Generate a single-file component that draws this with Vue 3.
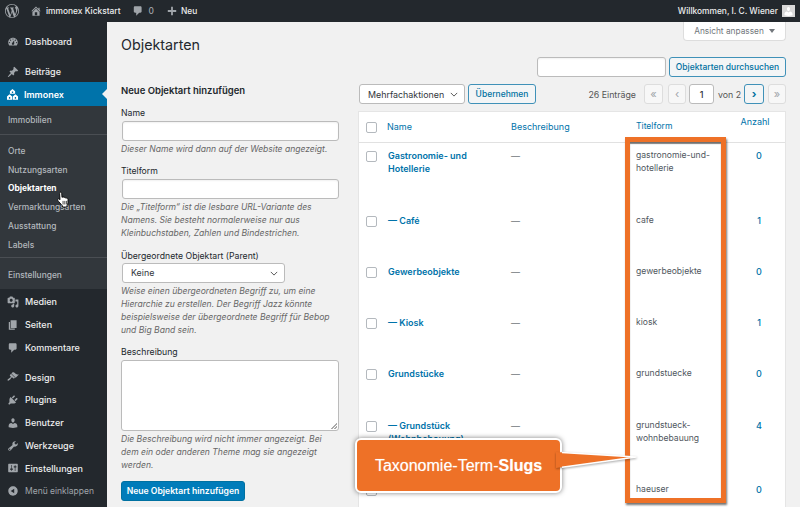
<script setup>
const icons = {
  dashboard: 'M3.76 16h12.48c1.1-1.37 1.76-3.11 1.76-5 0-4.42-3.58-8-8-8s-8 3.58-8 8c0 1.89.66 3.63 1.76 5zM10 4c.55 0 1 .45 1 1s-.45 1-1 1-1-.45-1-1 .45-1 1-1zM6 6c.55 0 1 .45 1 1s-.45 1-1 1-1-.45-1-1 .45-1 1-1zm8 0c.55 0 1 .45 1 1s-.45 1-1 1-1-.45-1-1 .45-1 1-1zm-5.37 5.55L12 7v6c0 1.1-.9 2-2 2s-2-.9-2-2c0-.57.24-1.08.63-1.45zM4 10c.55 0 1 .45 1 1s-.45 1-1 1-1-.45-1-1 .45-1 1-1zm12 0c.55 0 1 .45 1 1s-.45 1-1 1-1-.45-1-1 .45-1 1-1z',
  pin: 'M10.44 3.02l1.82-1.82 6.36 6.35-1.83 1.82c-1.05-.68-2.48-.57-3.41.36l-.75.75c-.92.93-1.04 2.35-.35 3.41l-1.83 1.82-2.41-2.41-2.8 2.79c-.42.42-3.38 2.71-3.8 2.29s1.86-3.39 2.28-3.81l2.79-2.79L4.1 9.36l1.83-1.82c1.05.69 2.48.57 3.4-.36l.75-.75c.93-.92 1.05-2.35.36-3.41z',
  immonex: 'M10 1.500l4 3.600V9H6V5.100zM9 5.500v2h2v-2zM5.500 9.500l4 3.400V18h-8v-5.100zM4.500 14v2.500h2V14zM14.500 9.500l4 3.400V18h-8v-5.100zM13.500 14v2.500h2V14z',
  media: 'M13 11V4c0-.55-.45-1-1-1h-1.670L9 1H5L3.670 3H2c-.55 0-1 .45-1 1v7c0 .55.45 1 1 1h10c.55 0 1-.45 1-1zM7 4.500c1.380 0 2.500 1.120 2.500 2.500S8.380 9.500 7 9.500 4.500 8.380 4.500 7 5.620 4.500 7 4.500zM14 6h5v10.500c0 1.380-1.120 2.500-2.500 2.500S14 17.880 14 16.500s1.120-2.500 2.500-2.500c.17 0 .34.02.5.05V9h-3V6zm-4 8.050V13h2v3.500c0 1.380-1.120 2.500-2.500 2.500S7 17.880 7 16.500 8.120 14 9.500 14c.17 0 .34.02.5.05z',
  page: 'M6 15V2h10v13H6zm-1 1h8v2H3V5h2v11z',
  comment: 'M5 2h9c1.100 0 2 .9 2 2v7c0 1.100-.9 2-2 2h-2l-5 5v-5H5c-1.100 0-2-.9-2-2V4c0-1.100.9-2 2-2z',
  design: 'M14.480 11.060L7.410 3.990l1.500-1.500c.5-.56 2.300-.47 3.510.32 1.210.8 1.430 1.280 2.910 2.100 1.180.64 2.450 1.260 4.450.85zm-.71.71L6.700 4.700 4.930 6.470c-.39.39-.39 1.020 0 1.410l1.060 1.060c.39.39.39 1.030 0 1.420-.6.6-1.430 1.110-2.210 1.690-.35.26-.7.53-1.010.84C1.430 13.230.4 14.980 1.200 15.800c.8.82 2.570-.23 3.910-1.570.31-.31.58-.66.85-1.020.57-.78 1.080-1.610 1.690-2.210.39-.39 1.020-.39 1.410 0l1.060 1.060c.39.39 1.020.39 1.410 0z',
  plugin: 'M13.110 4.360L9.870 7.600 8 5.730l3.240-3.240c.35-.34 1.050-.2 1.560.32.52.51.66 1.210.31 1.550zm-8 1.770l.91-1.120 9.010 9.010-1.190.84c-.71.71-2.630 1.160-3.820 1.160H6.140L4.900 17.260c-.59.59-1.540.59-2.120 0-.59-.58-.59-1.530 0-2.120l1.240-1.240v-3.880c0-1.130.4-3.190 1.090-3.890zm7.260 3.970l3.240-3.240c.34-.35 1.040-.21 1.550.31.52.51.66 1.210.31 1.550l-3.240 3.250z',
  users: 'M10 9.250c-2.270 0-2.730-3.440-2.730-3.440C7 4.020 7.820 2 9.970 2c2.160 0 2.980 2.020 2.710 3.810 0 0-.41 3.440-2.680 3.440zm0 2.570L12.720 10c2.390 0 4.520 2.330 4.520 4.530v2.490s-3.650 1.130-7.240 1.130c-3.650 0-7.240-1.130-7.240-1.130v-2.490c0-2.250 1.940-4.480 4.470-4.480z',
  tools: 'M16.680 9.770c-1.340 1.340-3.300 1.670-4.950.99l-5.410 6.520c-.99.99-2.590.99-3.580 0s-.99-2.590 0-3.570l6.520-5.420c-.68-1.650-.35-3.610.99-4.950 1.280-1.280 3.120-1.620 4.720-1.060l-2.890 2.890 2.820 2.820 2.860-2.870c.53 1.580.18 3.390-1.080 4.650zM3.810 16.210c.4.39 1.040.39 1.430 0 .4-.4.4-1.040 0-1.430-.39-.4-1.030-.4-1.430 0-.39.39-.39 1.030 0 1.430z',
  settings: 'M18 16V4c0-.55-.45-1-1-1H3c-.55 0-1 .45-1 1v12c0 .55.45 1 1 1h14c.55 0 1-.45 1-1zM8 11h1c.55 0 1 .45 1 1s-.45 1-1 1H8v1.500c0 .28-.22.5-.5.5s-.5-.22-.5-.5V13H6c-.55 0-1-.45-1-1s.45-1 1-1h1V5.500c0-.28.22-.5.5-.5s.5.22.5.5V11zm5-2h-1c-.55 0-1-.45-1-1s.45-1 1-1h1V5.500c0-.28.22-.5.5-.5s.5.22.5.5V7h1c.55 0 1 .45 1 1s-.45 1-1 1h-1v5.500c0 .28-.22.5-.5.5s-.5-.22-.5-.5V9z',
  collapse: 'M10 2.160c4.330 0 7.840 3.510 7.840 7.840s-3.510 7.840-7.840 7.840S2.160 14.330 2.160 10 5.710 2.160 10 2.160zm2 11.720V6.120L6.180 9.970z',
  home: 'M16 8.500l1.530 1.530-1.060 1.060L10 4.620l-6.470 6.470-1.060-1.060L10 2.500l4 4v-2h2v4zm-6-2.460l6 5.990V18H4v-5.970zM12 17v-5H8v5h4z',
  plus: 'M17 8.500v3h-5.500V17h-3v-5.500H3v-3h5.500V3h3v5.500z',
  wp: 'M20 10c0-5.510-4.490-10-10-10C4.480 0 0 4.490 0 10c0 5.520 4.480 10 10 10 5.510 0 10-4.480 10-10zM7.780 15.370L4.370 6.220c.55-.02 1.170-.08 1.170-.08.5-.06.44-1.130-.06-1.110 0 0-1.450.11-2.370.11-.18 0-.37 0-.58-.01C4.120 2.690 6.870 1.110 10 1.110c2.330 0 4.450.87 6.050 2.340-.68-.11-1.650.39-1.650 1.580 0 .74.45 1.360.9 2.100.35.61.55 1.360.55 2.460 0 1.490-1.400 5-1.400 5l-3.030-8.370c.54-.02.82-.17.82-.17.5-.05.44-1.250-.06-1.220 0 0-1.440.12-2.380.12-.87 0-2.330-.12-2.330-.12-.5-.03-.56 1.200-.06 1.220l.92.08 1.260 3.410zM17.410 10c.24-.64.74-1.870.43-4.250.7 1.290 1.050 2.710 1.050 4.250 0 3.290-1.730 6.240-4.400 7.780.97-2.590 1.940-5.200 2.920-7.780zM6.100 18.090C3.120 16.650 1.110 13.530 1.110 10c0-1.300.23-2.480.72-3.590C3.250 10.300 4.670 14.200 6.100 18.090zm4.030-6.630l2.580 6.980c-.86.29-1.760.45-2.710.45-.79 0-1.570-.11-2.290-.33.81-2.380 1.620-4.740 2.420-7.100z'
}

const subItems = ['Orte', 'Nutzungsarten', 'Objektarten', 'Vermarktungsarten', 'Ausstattung', 'Labels']
const lowerMenu = [
  { label: 'Medien', icon: 'media' },
  { label: 'Seiten', icon: 'page' },
  { label: 'Kommentare', icon: 'comment' }
]
const toolMenu = [
  { label: 'Design', icon: 'design' },
  { label: 'Plugins', icon: 'plugin' },
  { label: 'Benutzer', icon: 'users' },
  { label: 'Werkzeuge', icon: 'tools' },
  { label: 'Einstellungen', icon: 'settings' }
]

const rows = [
  { name: 'Gastronomie- und Hotellerie', slug: 'gastronomie-und-hotellerie', count: 0 },
  { name: '— Café', slug: 'cafe', count: 1 },
  { name: 'Gewerbeobjekte', slug: 'gewerbeobjekte', count: 0 },
  { name: '— Kiosk', slug: 'kiosk', count: 1 },
  { name: 'Grundstücke', slug: 'grundstuecke', count: 0 },
  { name: '— Grundstück (Wohnbebauung)', slug: 'grundstueck-wohnbebauung', count: 4 },
  { name: 'Häuser', slug: 'haeuser', count: 0 }
]
</script>

<template>
  <div class="page">
    <header class="topbar">
      <svg class="bar-wp" viewBox="0 0 20 20"><path :d="icons.wp" fill-rule="evenodd" /></svg>
      <svg class="bar-icon home" viewBox="0 0 20 20"><path :d="icons.home" fill-rule="evenodd" /></svg>
      <span class="bar-text site">immonex Kickstart</span>
      <svg class="bar-icon bubble" viewBox="0 0 20 20"><path :d="icons.comment" /></svg>
      <span class="bar-text zero">0</span>
      <svg class="bar-icon plus" viewBox="0 0 20 20"><path :d="icons.plus" /></svg>
      <span class="bar-text">Neu</span>
      <span class="bar-text welcome">Willkommen, I. C. Wiener</span>
      <span class="avatar">
        <svg viewBox="0 0 20 20"><path :d="icons.users" /></svg>
      </span>
    </header>

    <div class="body-row">
      <nav class="sidebar">
        <a class="menu-item first">
          <svg viewBox="0 0 20 20"><path :d="icons.dashboard" fill-rule="evenodd" /></svg>Dashboard
        </a>
        <a class="menu-item posts">
          <svg viewBox="0 0 20 20"><path :d="icons.pin" /></svg>Beiträge
        </a>
        <a class="menu-item current">
          <svg viewBox="0 0 20 20"><path :d="icons.immonex" fill-rule="evenodd" /></svg>Immonex
        </a>
        <div class="submenu">
          <a class="sub-item solo">Immobilien</a>
          <div class="sub-group">
            <a v-for="item in subItems" :key="item" class="sub-item" :class="{ active: item === 'Objektarten' }">{{ item }}</a>
          </div>
          <a class="sub-item solo last">Einstellungen</a>
        </div>
        <div class="menu-block">
          <a v-for="item in lowerMenu" :key="item.label" class="menu-item">
            <svg viewBox="0 0 20 20"><path :d="icons[item.icon]" fill-rule="evenodd" /></svg>{{ item.label }}
          </a>
        </div>
        <div class="menu-block tools">
          <a v-for="item in toolMenu" :key="item.label" class="menu-item">
            <svg viewBox="0 0 20 20"><path :d="icons[item.icon]" fill-rule="evenodd" /></svg>{{ item.label }}
          </a>
          <a class="menu-item collapse">
            <svg viewBox="0 0 20 20"><path :d="icons.collapse" fill-rule="evenodd" /></svg>Menü einklappen
          </a>
        </div>
      </nav>

      <main class="content">
        <div class="screen-tab">Ansicht anpassen <i class="tab-arrow"></i></div>

        <h1 class="title">Objektarten</h1>

        <div class="search-row">
          <input class="field search" type="text">
          <button class="btn search-btn">Objektarten durchsuchen</button>
        </div>

        <div class="columns">
          <section class="form-col">
            <h2>Neue Objektart hinzufügen</h2>
            <label>Name</label>
            <input class="field wide" type="text">
            <p class="help">Dieser Name wird dann auf der Website angezeigt.</p>

            <label>Titelform</label>
            <input class="field wide" type="text">
            <p class="help">Die „Titelform“ ist die lesbare URL-Variante des Namens. Sie besteht normalerweise nur aus Kleinbuchstaben, Zahlen und Bindestrichen.</p>

            <label>Übergeordnete Objektart (Parent)</label>
            <div class="select parent">Keine<svg viewBox="0 0 10 6"><path d="M1 1l4 4 4-4" /></svg></div>
            <p class="help">Weise einen übergeordneten Begriff zu, um eine Hierarchie zu erstellen. Der Begriff Jazz könnte beispielsweise der übergeordnete Begriff für Bebop und Big Band sein.</p>

            <label>Beschreibung</label>
            <div class="textarea"></div>
            <p class="help">Die Beschreibung wird nicht immer angezeigt. Bei dem ein oder anderen Theme mag sie angezeigt werden.</p>

            <button class="btn primary">Neue Objektart hinzufügen</button>
          </section>

          <section class="list-col">
            <div class="tablenav">
              <div class="select bulk">Mehrfachaktionen<svg viewBox="0 0 10 6"><path d="M1 1l4 4 4-4" /></svg></div>
              <button class="btn apply">Übernehmen</button>
              <span class="entries">26 Einträge</span>
              <span class="pg off first-pg">«</span>
              <span class="pg off prev-pg">‹</span>
              <span class="pg-input">1</span>
              <span class="pg-of">von 2</span>
              <span class="pg on">›</span>
              <span class="pg off last-pg">»</span>
            </div>

            <div class="table">
              <div class="row head">
                <span class="cell-check"><i class="check"></i></span>
                <a class="cell-name">Name</a>
                <a class="cell-desc">Beschreibung</a>
                <a class="cell-slug">Titelform</a>
                <a class="cell-count">Anzahl</a>
              </div>
              <div v-for="row in rows" :key="row.slug" class="row">
                <span class="cell-check"><i class="check"></i></span>
                <a class="cell-name strong">{{ row.name }}</a>
                <span class="cell-desc">—</span>
                <span class="cell-slug">{{ row.slug }}</span>
                <a class="cell-count">{{ row.count }}</a>
              </div>
            </div>
          </section>
        </div>
      </main>
    </div>

    <!-- annotation layer, drawn on top of the screenshot -->
    <div class="mark-box"></div>
    <div class="callout">Taxonomie-Term-<b>Slugs</b></div>
    <svg class="callout-tail" viewBox="0 0 90 30">
      <path d="M0 7L80 12 0 23z" fill="#ee7127" />
      <path d="M6 7.400L80 12 6 22.200" fill="none" stroke="#fff" stroke-width="1.500" stroke-linejoin="round" />
    </svg>
    <svg class="cursor" viewBox="0 0 16 20">
      <path d="M4 1.500c1-.6 1.900 0 2 1l.3 4.500 1-.3c.6-.2 1.100.1 1.300.5.600-.3 1.200-.1 1.500.4.600-.3 1.200 0 1.400.5.900-.2 1.500.4 1.500 1.200v3.700c0 1.500-.7 2.400-1.200 3.500v1.300H6.800v-1.300C5.300 14.500 2.600 12 1.700 10.500c-.6-1-.1-1.800.7-1.800.6 0 1.100.4 1.700 1.100L3.700 2.700c0-.5 0-1 .3-1.200z" fill="#fff" stroke="#000" stroke-width="1" />
      <path d="M7.500 11v4M9.500 11v4M11.500 11v4" stroke="#000" stroke-width=".8" />
    </svg>
  </div>
</template>

<style scoped>
.page {
  position: relative;
  width: 800px;
  height: 507px;
  overflow: hidden;
  background: #f1f1f1;
  color: #444;
  font-family: Inter, "Liberation Sans", sans-serif;
  font-size: 9px;
}

/* top bar */
.topbar {
  display: flex;
  align-items: center;
  height: 22px;
  padding: 0 5px;
  background: #23282d;
  color: #eee;
}
.topbar svg {
  flex: none;
  fill: #a0a5aa;
}
.bar-wp {
  width: 14px;
  height: 14px;
}
.bar-icon {
  width: 12px;
  height: 12px;
}
.home {
  margin-left: 11px;
  margin-right: 4px;
}
.bubble {
  margin-left: 11px;
  margin-right: 5px;
}
.plus {
  margin-left: 12px;
  margin-right: 3px;
}
.bar-text {
  font-size: 8.4px;
  font-weight: 500;
}
.zero {
  color: #a0a5aa;
}
.welcome {
  margin-left: auto;
  margin-right: 4px;
}
.avatar {
  display: flex;
  align-items: flex-end;
  justify-content: center;
  width: 13px;
  height: 12px;
  background: #d8d8d8;
}
.topbar .avatar svg {
  width: 11px;
  height: 11px;
  fill: #fff;
}

/* sidebar */
.body-row {
  display: flex;
  height: 485px;
}
.sidebar {
  flex: none;
  width: 107px;
  background: #23282d;
}
.menu-item {
  display: flex;
  align-items: center;
  height: 23px;
  padding-left: 7px;
  color: #eee;
  font-size: 9px;
  font-weight: 500;
}
.menu-item svg {
  flex: none;
  width: 12px;
  height: 12px;
  margin-right: 6px;
  fill: #a0a5aa;
}
.menu-item.first {
  margin-top: 8px;
}
.menu-item.posts {
  margin-top: 7px;
}
.menu-item.current {
  position: relative;
  height: 24px;
  margin-top: -1px;
  padding-left: 6px;
  background: #0073aa;
  color: #fff;
  font-weight: 600;
}
.menu-item.current svg {
  width: 13px;
  height: 13px;
  margin-right: 5px;
  fill: #fff;
}
.menu-item.current::after {
  content: "";
  position: absolute;
  top: 7px;
  right: 0;
  border: 5px solid transparent;
  border-left: 0;
  border-right-color: #f1f1f1;
}
.submenu {
  background: #32373c;
}
.sub-item {
  display: flex;
  align-items: center;
  height: 18.8px;
  padding-left: 8px;
  color: #b4b9be;
  font-size: 8.4px;
  font-weight: 500;
}
.sub-item.active {
  color: #fff;
  font-weight: 700;
}
.sub-item.solo {
  height: 28px;
}
.sub-item.last {
  box-sizing: border-box;
  height: 31px;
  padding-top: 2px;
}
.sub-group {
  padding: 6.5px 0 3px;
  border-top: 1px solid #4a4e53;
  border-bottom: 1px solid #4a4e53;
}
.menu-block {
  padding-top: 1px;
}
.tools {
  padding-top: 6.5px;
}
.tools .menu-item {
  height: 22.8px;
}
.menu-item.collapse {
  color: #a0a5aa;
  font-size: 8.5px;
  font-weight: 400;
}

/* content */
.content {
  position: relative;
  flex: 1;
  min-width: 0;
  padding: 0 14px;
}
.screen-tab {
  position: absolute;
  top: 0;
  right: 14px;
  display: flex;
  align-items: center;
  justify-content: center;
  gap: 5px;
  box-sizing: border-box;
  width: 103px;
  height: 19px;
  background: #fff;
  border: 1px solid #ddd;
  border-top: 0;
  border-radius: 0 0 4px 4px;
  color: #72777c;
  font-size: 8.3px;
}
.tab-arrow {
  border: 3px solid transparent;
  border-top: 4px solid #72777c;
  border-bottom: 0;
}
.title {
  margin: 14px 0 0;
  color: #23282d;
  font-size: 14.3px;
  font-weight: 400;
  line-height: 18px;
}
.search-row {
  display: flex;
  justify-content: flex-end;
  gap: 3px;
  height: 20px;
  margin-top: 3px;
}
.field {
  box-sizing: border-box;
  height: 20px;
  background: #fff;
  border: 1px solid #bbb;
  border-radius: 3px;
  box-shadow: inset 0 1px 2px rgba(0, 0, 0, .06);
  outline: none;
}
.search {
  flex: none;
  width: 129px;
}
.btn {
  box-sizing: border-box;
  flex: none;
  height: 20px;
  padding: 0;
  background: #f3f5f6;
  border: 1px solid #3f91b8;
  border-radius: 3px;
  color: #0071a1;
  font: 500 8.5px Inter, "Liberation Sans", sans-serif;
  white-space: nowrap;
}
.search-btn {
  width: 117px;
}
.columns {
  display: flex;
  gap: 18px;
}

/* form */
.form-col {
  flex: none;
  width: 219px;
  margin-top: 7px;
}
.form-col h2 {
  margin: 0 0 8.5px;
  color: #23282d;
  font-size: 9.5px;
  font-weight: 600;
  line-height: 14px;
}
.form-col label {
  display: block;
  color: #23282d;
  font-size: 8.7px;
  line-height: 13px;
}
.wide {
  display: block;
  width: 217px;
  margin: 1px 0 0 1px;
}
.help {
  margin: 2px 0 9.5px;
  color: #666;
  font-size: 8.55px;
  font-style: italic;
  line-height: 13px;
}
.select {
  position: relative;
  box-sizing: border-box;
  display: flex;
  flex: none;
  align-items: center;
  height: 20px;
  background: #fff;
  border: 1px solid #bbb;
  border-radius: 3px;
  color: #32373c;
  font-size: 8.9px;
}
.select svg {
  position: absolute;
  top: 7px;
  right: 6px;
  width: 8px;
  height: 5px;
  fill: none;
  stroke: #555;
  stroke-width: 1.2;
}
.parent {
  width: 163px;
  margin: 0 0 0 1px;
  padding-left: 8px;
}
.textarea {
  position: relative;
  box-sizing: border-box;
  width: 218px;
  height: 71px;
  margin-top: 1px;
  background: #fff;
  border: 1px solid #bbb;
  border-radius: 3px;
}
.textarea::after {
  content: "";
  position: absolute;
  right: 1px;
  bottom: 1px;
  width: 6px;
  height: 6px;
  background: linear-gradient(135deg, transparent 50%, #aaa 50%, #aaa 60%, transparent 60%, transparent 75%, #aaa 75%, #aaa 85%, transparent 85%);
}
.primary {
  display: block;
  width: 124px;
  margin-top: -1px;
  background: #007cba;
  border-color: #0071a1;
  color: #fff;
  font-size: 8.65px;
  font-weight: 600;
}

/* list */
.list-col {
  flex: 1;
  min-width: 0;
  margin-top: 7px;
}
.tablenav {
  display: flex;
  align-items: center;
  height: 20px;
  padding-left: 1px;
  white-space: nowrap;
}
.bulk {
  width: 106px;
  padding-left: 8px;
}
.apply {
  width: 68px;
  margin-left: 3px;
}
.entries {
  flex: none;
  margin-left: auto;
  margin-right: 8px;
  color: #555;
  font-size: 8.8px;
}
.pg,
.pg-input {
  box-sizing: border-box;
  display: flex;
  flex: none;
  align-items: center;
  justify-content: center;
  height: 20px;
  border: 1px solid #ddd;
  border-radius: 3px;
  font-size: 11px;
}
.pg {
  width: 18px;
}
.first-pg {
  width: 19px;
  margin-right: 5px;
}
.prev-pg {
  margin-right: 3px;
}
.pg.off {
  color: #a0a5aa;
  background: #f7f7f7;
}
.pg.on {
  width: 20px;
  margin-right: 4px;
  border-color: #3f91b8;
  color: #0071a1;
  background: #f3f5f6;
  font-weight: 700;
}
.pg-input {
  width: 25px;
  background: #fff;
  border-color: #bbb;
  color: #32373c;
  font-size: 9px;
  font-weight: 500;
}
.pg-of {
  flex: none;
  width: 22px;
  margin: 0 4px;
  color: #555;
  font-size: 8.8px;
}
.table {
  margin-top: 7px;
  background: #fff;
  border: 1px solid #e5e5e5;
  border-bottom: 0;
}
.row {
  display: flex;
  align-items: flex-start;
  padding: 6px 0 32px;
  line-height: 13.3px;
}
.row.head {
  box-sizing: border-box;
  height: 31px;
  padding: 8px 0 0;
  border-bottom: 1px solid #e1e1e1;
}
.cell-check {
  flex: none;
  box-sizing: border-box;
  width: 28px;
  padding-left: 7px;
}
.check {
  display: block;
  box-sizing: border-box;
  width: 11px;
  height: 11px;
  margin-top: 2px;
  background: #fff;
  border: 1px solid #b4b9be;
  border-radius: 2px;
}
.row a {
  color: #0073aa;
}
.cell-name {
  flex: none;
  box-sizing: border-box;
  width: 124px;
  padding-right: 28px;
}
.head .cell-name {
  padding-right: 0;
}
.strong {
  padding-left: 1px;
  font-weight: 600;
}
.cell-desc {
  flex: none;
  width: 124px;
  color: #72777c;
}
.cell-slug {
  flex: none;
  box-sizing: border-box;
  width: 90px;
  padding: 0 8px 0 1px;
  color: #50575e;
  font-size: 8.6px;
}
.cell-count {
  flex: 1;
  padding-left: 8px;
  text-align: center;
  font-weight: 500;
}
.head .cell-count {
  margin-top: -5px;
  padding-left: 0;
  font-weight: 400;
}

/* annotations */
.mark-box {
  position: absolute;
  left: 625px;
  top: 137px;
  box-sizing: border-box;
  width: 101px;
  height: 366px;
  border: 5px solid #ee7127;
  box-shadow: 1px 2px 2px rgba(0, 0, 0, .55), inset 0 2px 1px rgba(0, 0, 0, .5);
}
.callout {
  position: absolute;
  left: 355px;
  top: 438px;
  display: flex;
  align-items: center;
  justify-content: center;
  box-sizing: border-box;
  width: 207px;
  height: 55px;
  background: #ee7127;
  border: 2px solid #fff;
  border-radius: 6px;
  box-shadow: 0 0 5px rgba(0, 0, 0, .5);
  color: #fff;
  font-family: "Liberation Sans", Arial, sans-serif;
  font-size: 16px;
  text-shadow: 0 0 1px rgba(255, 255, 255, .5);
  white-space: pre;
}
.callout-tail {
  position: absolute;
  left: 556px;
  top: 445px;
  width: 90px;
  height: 30px;
  filter: drop-shadow(0 1px 1px rgba(0, 0, 0, .35));
}
.cursor {
  position: absolute;
  left: 56px;
  top: 191px;
  width: 15px;
  height: 18px;
}
</style>
